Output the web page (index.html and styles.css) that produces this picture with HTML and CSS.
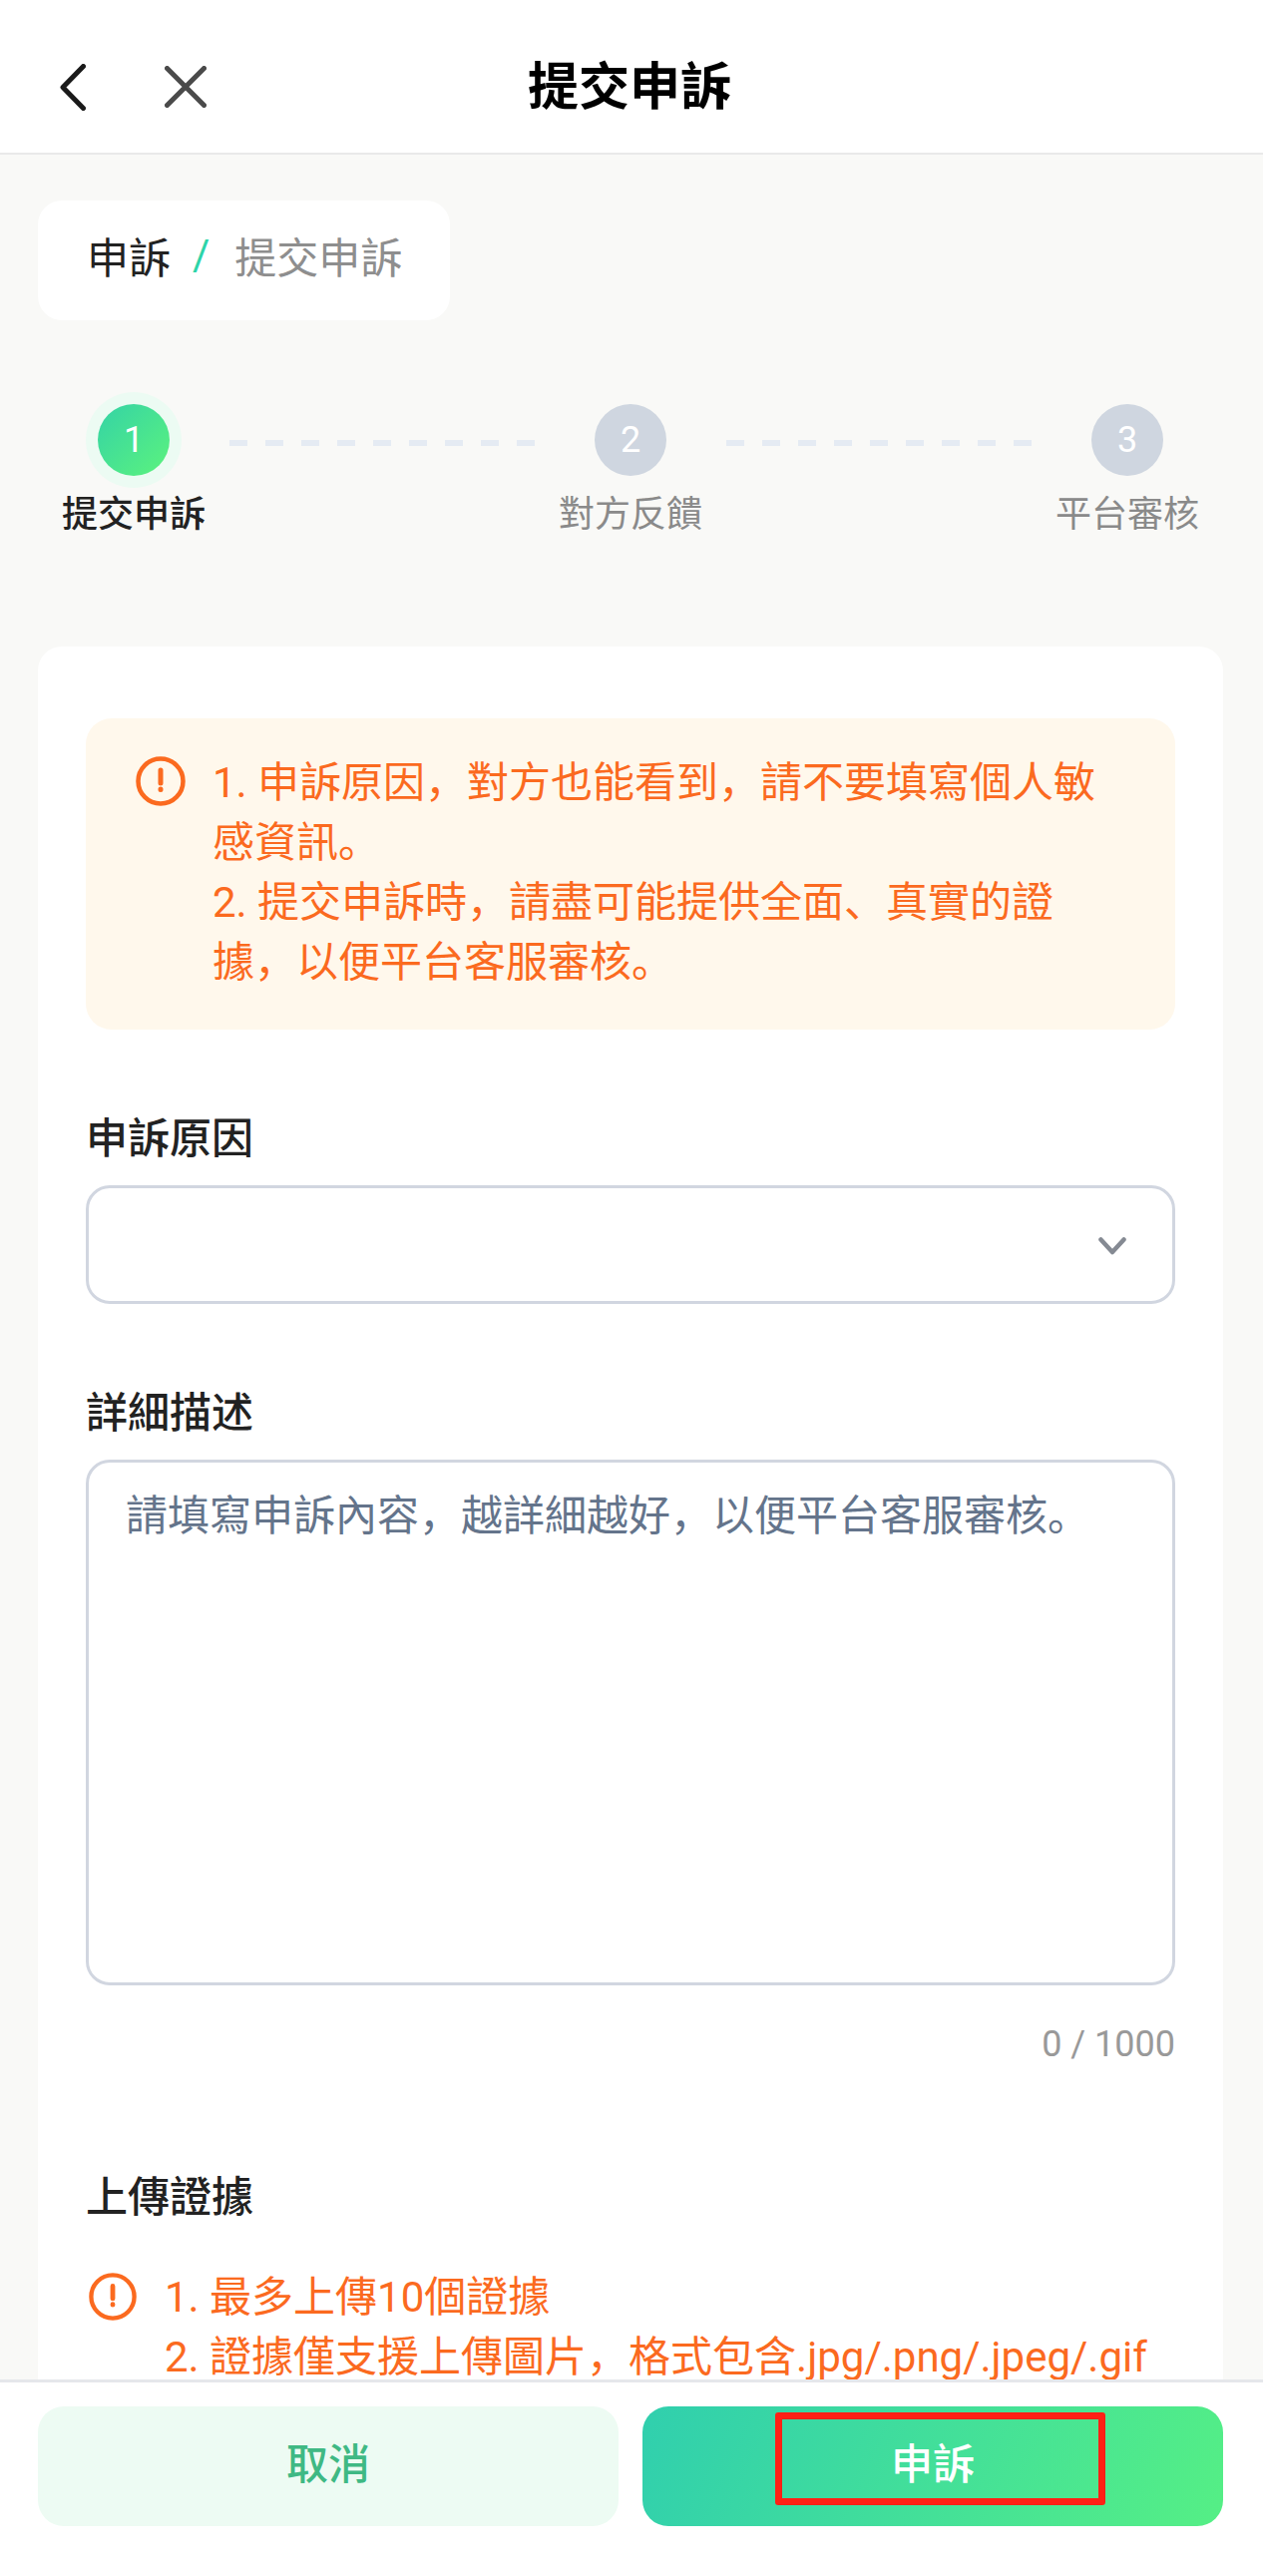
FILE: index.html
```html
<!DOCTYPE html>
<html>
<head>
  <meta charset="utf-8">
  <title>提交申訴</title>
  <link rel="stylesheet" href="styles.css">
</head>
<body>
  <div class="page">
    <header class="topbar">
      <svg class="icon-back" viewBox="0 0 26 47"><path d="M23.5 2.5 3 23.5l20.5 21"/></svg>
      <svg class="icon-close" viewBox="0 0 42 42"><path d="M2.5 2.5l37 37M39.5 2.5l-37 37"/></svg>
      <h1>提交申訴</h1>
    </header>

    <main class="content">
      <nav class="breadcrumb">
        <span>申訴</span>
        <i>/</i>
        <span class="current">提交申訴</span>
      </nav>

      <div class="steps">
        <div class="step active">
          <div class="dot">1</div>
          <div class="step-label">提交申訴</div>
        </div>
        <div class="dash"></div>
        <div class="step">
          <div class="dot">2</div>
          <div class="step-label">對方反饋</div>
        </div>
        <div class="dash"></div>
        <div class="step">
          <div class="dot">3</div>
          <div class="step-label">平台審核</div>
        </div>
      </div>

      <section class="card">
        <div class="alert">
          <svg class="icon-warn" viewBox="0 0 50 50"><circle cx="25" cy="25" r="22.5"/><path class="mark" d="M25 14v13M25 33v.5"/></svg>
          <p>1. 申訴原因，對方也能看到，請不要填寫個人敏感資訊。<br>2. 提交申訴時，請盡可能提供全面、真實的證據，以便平台客服審核。</p>
        </div>

        <label class="field-label reason-label">申訴原因</label>
        <div class="select">
          <svg class="icon-down" viewBox="0 0 28 18"><path d="M2.5 2.5 14 15 25.5 2.5"/></svg>
        </div>

        <label class="field-label">詳細描述</label>
        <textarea class="desc" placeholder="請填寫申訴內容，越詳細越好，以便平台客服審核。"></textarea>
        <div class="counter">0 / 1000</div>

        <label class="field-label upload-label">上傳證據</label>
        <div class="upload-tips">
          <svg class="icon-warn" viewBox="0 0 50 50"><circle cx="25" cy="25" r="22.5"/><path class="mark" d="M25 14v13M25 33v.5"/></svg>
          <p>1. 最多上傳10個證據<br>2. 證據僅支援上傳圖片，格式包含.jpg/.png/.jpeg/.gif</p>
        </div>
      </section>
    </main>

    <footer class="actions">
      <button class="btn-cancel">取消</button>
      <button class="btn-submit">申訴<span class="highlight"></span></button>
    </footer>
  </div>
</body>
</html>
```

FILE: styles.css
```css
* {
  box-sizing: border-box;
}

body {
  margin: 0;
  font-family: Roboto, "Noto Sans CJK SC", sans-serif;
  font-size: 42px;
  color: #222;
}

.page {
  height: 100vh;
  display: flex;
  flex-direction: column;
  background-color: #f9f9f7;
}

.topbar {
  position: relative;
  flex: none;
  height: 155px;
  padding: 13px 4px 0 0;
  background-color: #fff;
  border-bottom: 2px solid #e9e9e9;
  display: flex;
  align-items: center;
  justify-content: center;
}

.topbar h1 {
  margin: 0;
  font-size: 51px;
  font-weight: 700;
  color: #000;
}

.topbar svg {
  position: absolute;
  fill: none;
  stroke-linecap: round;
  stroke-linejoin: round;
}

.icon-back {
  left: 60px;
  top: 64px;
  width: 26px;
  height: 47px;
  stroke: #1a1a1a;
  stroke-width: 5;
}

.icon-close {
  left: 165px;
  top: 66px;
  width: 42px;
  height: 42px;
  stroke: #4a4a4a;
  stroke-width: 5;
}

.content {
  flex: 1;
  min-height: 0;
  overflow: hidden;
  padding: 46px 40px 0 38px;
}

.breadcrumb {
  width: 413px;
  height: 120px;
  padding: 0 0 12px 49px;
  background-color: #fff;
  border-radius: 24px;
  display: flex;
  align-items: center;
}

.breadcrumb i {
  margin: 0 25px 0 22px;
  font-style: normal;
  color: #2dd4a8;
}

.breadcrumb .current {
  color: #8e8e8e;
}

.steps {
  display: flex;
  margin: 84px 24px 0;
}

.step {
  flex: none;
  width: 144px;
  display: flex;
  flex-direction: column;
  align-items: center;
}

.dot {
  width: 72px;
  height: 72px;
  border-radius: 50%;
  background-color: #cfd6e0;
  color: #fff;
  font-size: 36px;
  display: flex;
  align-items: center;
  justify-content: center;
}

.step.active .dot {
  background: linear-gradient(135deg, #34d3a6, #5cf37d);
  box-shadow: 0 0 0 12px #ecfbf3;
}

.step-label {
  margin-top: 15px;
  font-size: 36px;
  line-height: 48px;
  color: #8a8a8a;
  white-space: nowrap;
}

.step.active .step-label {
  color: #222;
  font-weight: 500;
}

.dash {
  flex: 1;
  height: 6px;
  margin: 36px 24px 0;
  background: repeating-linear-gradient(90deg, #e5ebf3 0 18px, transparent 18px 36px);
}

.card {
  margin-top: 108px;
  height: 1800px;
  padding: 72px 48px 0;
  background-color: #fff;
  border-radius: 24px 24px 0 0;
}

.alert {
  height: 312px;
  padding: 35px 48px 0 50px;
  background-color: #fff8ec;
  border-radius: 26px;
  display: flex;
  gap: 27px;
  color: #fb6a1f;
}

.alert p,
.upload-tips p {
  margin: 0;
  line-height: 60px;
  min-width: 0;
}

.icon-warn {
  flex: none;
  width: 50px;
  height: 50px;
  margin-top: 3px;
  fill: none;
  stroke: #fb6a1f;
  stroke-width: 4.5;
  stroke-linecap: round;
}

.icon-warn .mark {
  stroke-width: 5;
}

.field-label {
  display: block;
  margin: 80px 0 16px;
  font-size: 42px;
  font-weight: 500;
  line-height: 60px;
}

.select {
  position: relative;
  height: 119px;
  border: 3px solid #d1d6e0;
  border-radius: 24px;
  background-color: #fff;
}

.icon-down {
  position: absolute;
  right: 46px;
  top: 49px;
  width: 28px;
  height: 18px;
  fill: none;
  stroke: #858a93;
  stroke-width: 4.5;
  stroke-linecap: round;
  stroke-linejoin: round;
}

.desc {
  display: block;
  width: 100%;
  height: 527px;
  padding: 24px 37px;
  border: 3px solid #d1d6e0;
  border-radius: 24px;
  font: inherit;
  line-height: 60px;
  resize: none;
  outline: none;
}

.desc::placeholder {
  color: #64748b;
  opacity: 1;
}

.counter {
  margin-top: 34px;
  text-align: right;
  font-size: 36px;
  line-height: 50px;
  color: #999;
}

.upload-label {
  margin: 99px 0 0;
}

.upload-tips {
  margin-top: 40px;
  padding-left: 3px;
  display: flex;
  gap: 28px;
  color: #fb6a1f;
}

.upload-tips .icon-warn {
  width: 48px;
  margin-top: 4px;
}

.actions {
  flex: none;
  height: 197px;
  padding: 24px 40px 0 38px;
  background-color: #fff;
  border-top: 3px solid #e5e7eb;
  display: flex;
  gap: 24px;
  position: relative;
}

.actions button {
  flex: 1;
  height: 120px;
  padding-bottom: 12px;
  border: none;
  border-radius: 26px;
  font: inherit;
  font-weight: 500;
}

.btn-cancel {
  background-color: #edfbf3;
  color: #3fb984;
}

.btn-submit {
  position: relative;
  background: linear-gradient(115deg, #30cfae, #55ef85);
  color: #fff;
}

.highlight {
  position: absolute;
  left: 133px;
  top: 6px;
  width: 331px;
  height: 93px;
  border: 7px solid #ff2015;
  border-radius: 3px;
}
```
